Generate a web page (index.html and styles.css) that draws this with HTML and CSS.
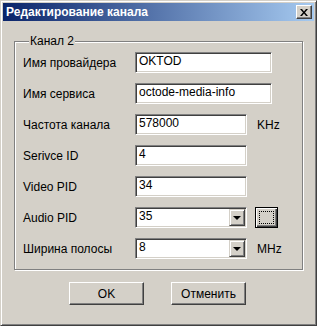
FILE: index.html
```html
<!DOCTYPE html>
<html lang="ru">
<head>
    <meta charset="UTF-8">
    <title>Редактирование канала</title>
    <link rel="stylesheet" href="styles.css">
</head>
<body>
    <div class="window">
        <div class="titlebar">
            <span class="title">Редактирование канала</span>
            <button class="close">
                <svg width="8" height="7" viewBox="0 0 8 7"><path d="M0 0h2l2 2.5L6 0h2L5 3.5 8 7H6L4 4.5 2 7H0l3-3.5z" fill="#000"/></svg>
            </button>
        </div>

        <div class="content">
            <fieldset class="group">
                <legend>Канал 2</legend>
                <div class="form">
                    <label>Имя провайдера</label>
                    <div class="edit wide">OKTOD</div>
                    <span></span>

                    <label>Имя сервиса</label>
                    <div class="edit wide">octode-media-info</div>
                    <span></span>

                    <label>Частота канала</label>
                    <div class="edit">578000</div>
                    <span class="unit">KHz</span>

                    <label>Serivce ID</label>
                    <div class="edit">4</div>
                    <span></span>

                    <label>Video PID</label>
                    <div class="edit">34</div>
                    <span></span>

                    <label>Audio PID</label>
                    <div class="edit combo">35<span class="arrow"><i></i></span></div>
                    <button class="more"><span class="focus"></span></button>

                    <label>Ширина полосы</label>
                    <div class="edit combo">8<span class="arrow"><i></i></span></div>
                    <span class="unit">MHz</span>
                </div>
            </fieldset>

            <div class="buttons">
                <button class="btn">OK</button>
                <button class="btn">Отменить</button>
            </div>
        </div>
    </div>
</body>
</html>
```

FILE: styles.css
```css
body {
    margin: 0;
    background: #d4d0c8;
    font-family: 'Liberation Sans', Arial, sans-serif;
    font-size: 11px;
    color: #000;
}

.window {
    box-sizing: border-box;
    width: 317px;
    height: 326px;
    padding: 2px;
    border: 1px solid;
    border-color: #d4d0c8 #404040 #404040 #d4d0c8;
    box-shadow: inset 1px 1px #fff, inset -1px -1px #808080;
    display: flex;
    flex-direction: column;
}

.titlebar {
    height: 18px;
    display: flex;
    align-items: center;
    justify-content: space-between;
    padding: 0 2px 0 3px;
    background: linear-gradient(to right, #0a246a, #a6caf0);
}

.title {
    color: #fff;
    font-weight: bold;
    font-size: 12px;
}

.close {
    width: 16px;
    height: 14px;
    padding: 0;
    border: 1px solid;
    border-color: #fff #404040 #404040 #fff;
    box-shadow: inset -1px -1px #808080;
    background: #d4d0c8;
    display: flex;
    align-items: center;
    justify-content: center;
}

.content {
    padding: 13px 10px 0 11px;
}

.group {
    margin: 0;
    padding: 4px 8px 10px 8px;
    border: 1px solid #808080;
    box-shadow: inset 1px 1px #fff, 1px 1px #fff;
    width: 289px;
    box-sizing: border-box;
}

.group legend {
    padding: 0 1px;
    margin-left: 6px;
    background: #d4d0c8;
    font-size: 12px;
}

.form {
    display: grid;
    grid-template-columns: 112px 112px 1fr;
    grid-auto-rows: 21px;
    row-gap: 10px;
    align-items: center;
}

.form label {
    font-size: 12px;
}

.edit {
    box-sizing: border-box;
    height: 21px;
    padding: 0 3px;
    line-height: 17px;
    font-size: 12px;
    background: #fff;
    border: 1px solid;
    border-color: #808080 #fff #fff #808080;
    box-shadow: inset 1px 1px #404040, inset -1px -1px #d4d0c8;
    position: relative;
}

.edit.wide {
    width: 137px;
}

.unit {
    padding-left: 10px;
    font-size: 12px;
}

.arrow {
    position: absolute;
    top: 1px;
    right: 1px;
    width: 16px;
    height: 17px;
    box-sizing: border-box;
    background: #d4d0c8;
    border: 1px solid;
    border-color: #d4d0c8 #404040 #404040 #d4d0c8;
    box-shadow: inset 1px 1px #fff, inset -1px -1px #808080;
    display: flex;
    align-items: center;
    justify-content: center;
}

.arrow i {
    width: 0;
    height: 0;
    border-left: 4px solid transparent;
    border-right: 4px solid transparent;
    border-top: 4px solid #000;
    margin-top: 1px;
}

.more {
    margin-left: 8px;
    width: 23px;
    height: 21px;
    padding: 0;
    background: #d4d0c8;
    border: 1px solid #000;
    box-shadow: inset 1px 1px #fff, inset -1px -1px #404040, inset -2px -2px #808080;
    display: flex;
    align-items: center;
    justify-content: center;
}

.more .focus {
    width: 13px;
    height: 11px;
    border: 1px dotted #000;
}

.buttons {
    display: flex;
    justify-content: center;
    gap: 27px;
    padding-top: 12px;
    padding-right: 3px;
}

.btn {
    width: 75px;
    height: 23px;
    padding: 0;
    font-family: 'Liberation Sans', Arial, sans-serif;
    font-size: 12px;
    background: #d4d0c8;
    border: 1px solid;
    border-color: #fff #404040 #404040 #fff;
    box-shadow: inset -1px -1px #808080;
}
```
